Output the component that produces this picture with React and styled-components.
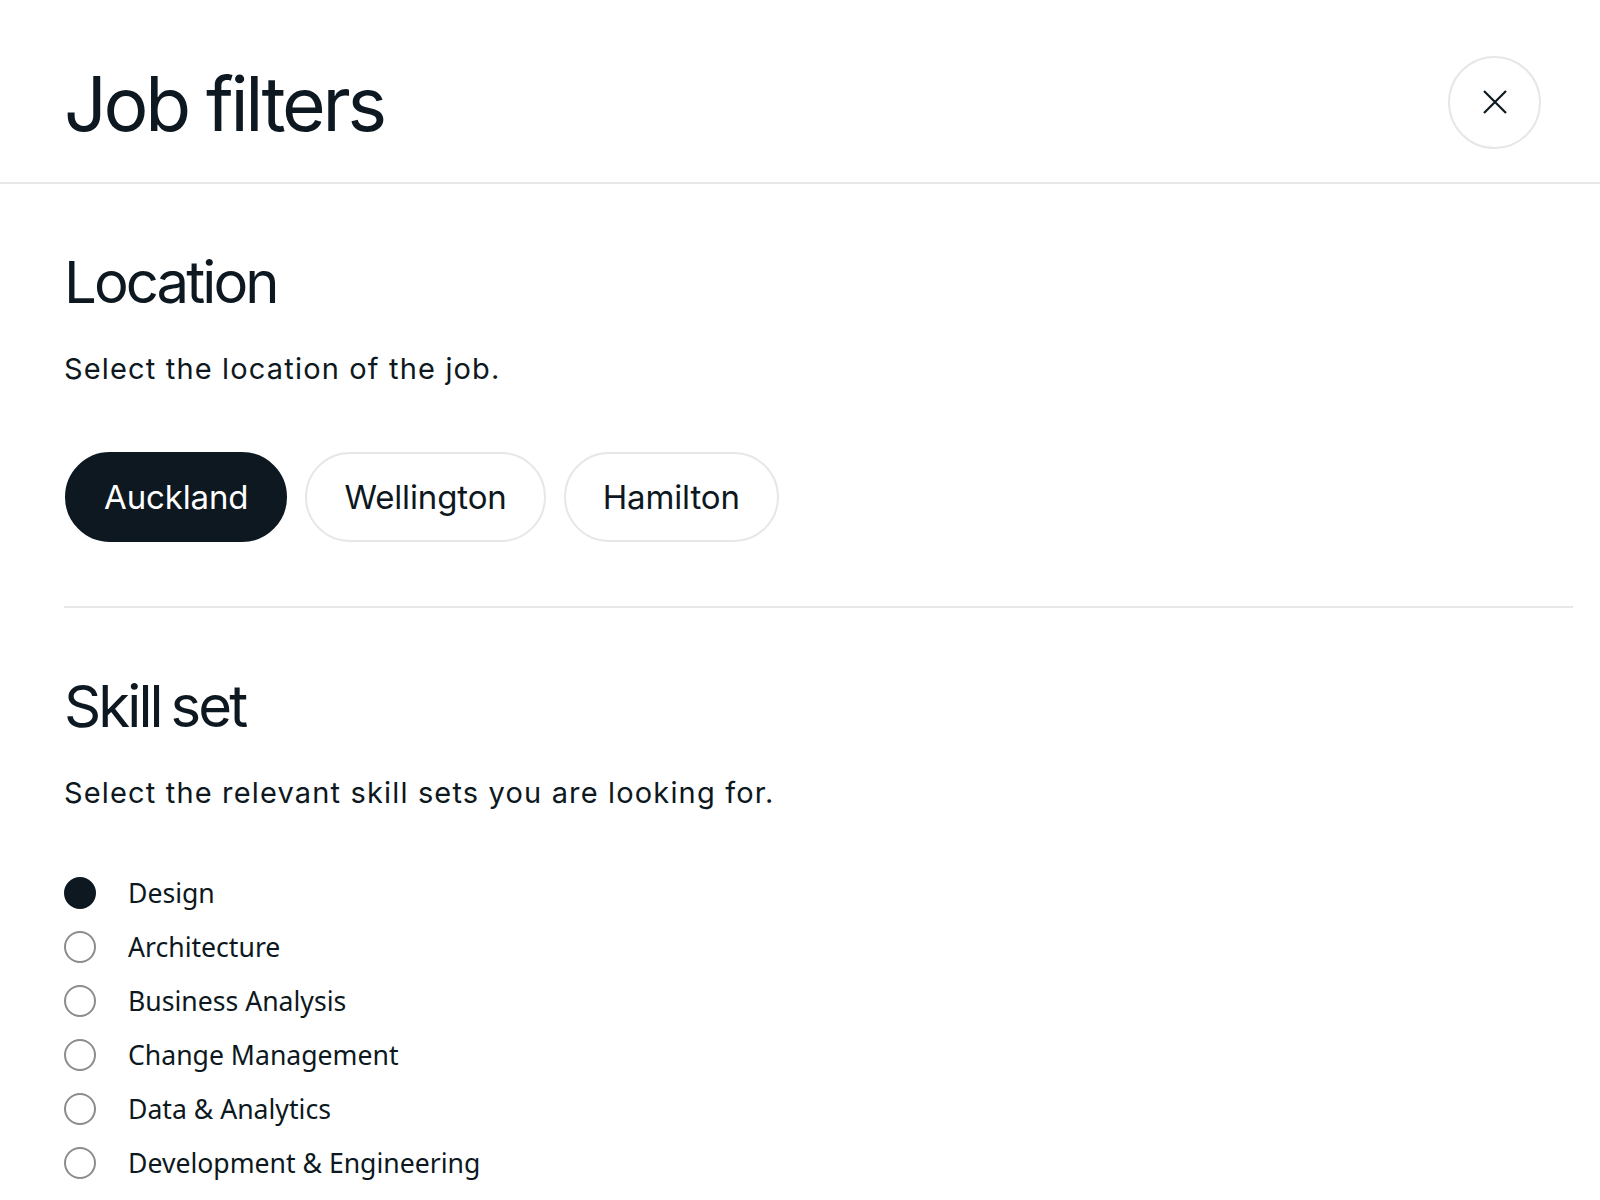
import React from "react";
import styled, { createGlobalStyle } from "styled-components";

const ink = "#0d1820";
const line = "#e6e7e8";

const GlobalStyle = createGlobalStyle`
  html, body {
    margin: 0;
    padding: 0;
    background: #ffffff;
  }
  body {
    font-family: "Inter", "Liberation Sans", sans-serif;
    color: ${ink};
  }
`;

const Panel = styled.div`
  width: 1600px;
  min-height: 1200px;
  background: #fff;
`;

const Header = styled.header`
  box-sizing: border-box;
  height: 184px;
  display: flex;
  align-items: center;
  justify-content: space-between;
  padding: 22px 59px 0 64px;
  border-bottom: 2px solid ${line};
`;

const Title = styled.h1`
  margin: 0;
  font-size: 75px;
  font-weight: 400;
  letter-spacing: -0.043em;
  line-height: 1;
  transform: translateY(1px);
`;

const CloseButton = styled.button`
  width: 93px;
  height: 93px;
  border-radius: 50%;
  border: 2px solid ${line};
  background: #fff;
  display: grid;
  place-items: center;
  padding: 0;
  cursor: pointer;
  color: ${ink};
`;

const Body = styled.main`
  padding: 0 27px 0 64px;
`;

const Section = styled.section`
  padding: 69px 0 64px;
  border-bottom: ${(p) => (p.$divider ? `2px solid ${line}` : "none")};
`;

const Heading = styled.h2`
  margin: 0;
  font-size: 58px;
  font-weight: 400;
  letter-spacing: -0.05em;
  word-spacing: -0.06em;
  line-height: 1;
`;

const Description = styled.p`
  margin: 38px 0 0;
  font-size: 29px;
  line-height: 39px;
  letter-spacing: 0.04em;
`;

const ChipRow = styled.div`
  display: flex;
  gap: 18px;
  margin-top: 64px;
  margin-left: 1px;
`;

const Chip = styled.button`
  height: 90px;
  padding: 0 37px;
  border-radius: 45px;
  border: 2px solid ${(p) => (p.$active ? ink : line)};
  background: ${(p) => (p.$active ? ink : "#fff")};
  color: ${(p) => (p.$active ? "#fff" : ink)};
  font-family: "Inter", "Liberation Sans", sans-serif;
  font-size: 33px;
  letter-spacing: -0.004em;
  cursor: pointer;
`;

const RadioList = styled.ul`
  list-style: none;
  margin: 54px 0 0;
  padding: 0;
`;

const RadioRow = styled.li`
  height: 54px;
  display: flex;
  align-items: center;
  gap: 32px;
  font-family: "Noto Sans", "Open Sans", sans-serif;
  font-size: 26.6px;
`;

const RadioDot = styled.span`
  width: 32px;
  height: 32px;
  box-sizing: border-box;
  border-radius: 50%;
  border: 2px solid ${(p) => (p.$checked ? ink : "#8a8c8e")};
  background: ${(p) => (p.$checked ? ink : "#fff")};
  flex-shrink: 0;
`;

const locations = ["Auckland", "Wellington", "Hamilton"];
const skills = [
  "Design",
  "Architecture",
  "Business Analysis",
  "Change Management",
  "Data & Analytics",
  "Development & Engineering",
];

export default function App() {
  return (
    <Panel>
      <GlobalStyle />
      <Header>
        <Title>Job filters</Title>
        <CloseButton aria-label="Close">
          <svg width="26" height="26" viewBox="0 0 26 26" fill="none">
            <path d="M2 2L24 24M24 2L2 24" stroke="currentColor" strokeWidth="2.2" />
          </svg>
        </CloseButton>
      </Header>
      <Body>
        <Section $divider>
          <Heading>Location</Heading>
          <Description>Select the location of the job.</Description>
          <ChipRow>
            {locations.map((l, i) => (
              <Chip key={l} $active={i === 0}>
                {l}
              </Chip>
            ))}
          </ChipRow>
        </Section>
        <Section>
          <Heading>Skill set</Heading>
          <Description>Select the relevant skill sets you are looking for.</Description>
          <RadioList>
            {skills.map((s, i) => (
              <RadioRow key={s}>
                <RadioDot $checked={i === 0} />
                {s}
              </RadioRow>
            ))}
          </RadioList>
        </Section>
      </Body>
    </Panel>
  );
}
